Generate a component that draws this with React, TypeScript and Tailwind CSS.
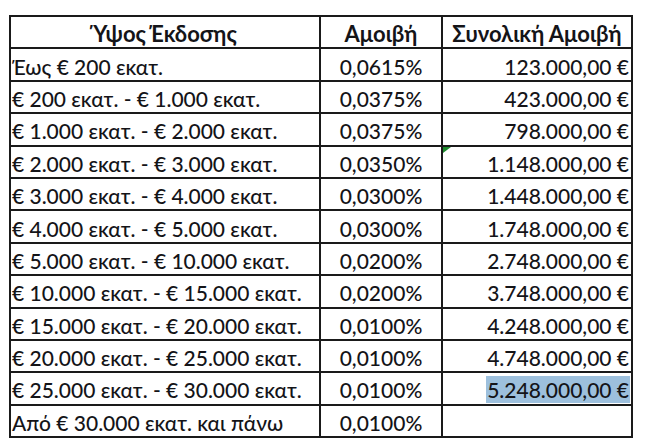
import React from "react";

const rows: [string, string, string][] = [
  ["Έως € 200 εκατ.", "0,0615%", "123.000,00 €"],
  ["€ 200 εκατ. - € 1.000 εκατ.", "0,0375%", "423.000,00 €"],
  ["€ 1.000 εκατ. - € 2.000 εκατ.", "0,0375%", "798.000,00 €"],
  ["€ 2.000 εκατ. - € 3.000 εκατ.", "0,0350%", "1.148.000,00 €"],
  ["€ 3.000 εκατ. - € 4.000 εκατ.", "0,0300%", "1.448.000,00 €"],
  ["€ 4.000 εκατ. - € 5.000 εκατ.", "0,0300%", "1.748.000,00 €"],
  ["€ 5.000 εκατ. - € 10.000 εκατ.", "0,0200%", "2.748.000,00 €"],
  ["€ 10.000 εκατ. - € 15.000 εκατ.", "0,0200%", "3.748.000,00 €"],
  ["€ 15.000 εκατ. - € 20.000 εκατ.", "0,0100%", "4.248.000,00 €"],
  ["€ 20.000 εκατ. - € 25.000 εκατ.", "0,0100%", "4.748.000,00 €"],
  ["€ 25.000 εκατ. - € 30.000 εκατ.", "0,0100%", "5.248.000,00 €"],
  ["Από € 30.000 εκατ. και πάνω", "0,0100%", ""],
];

export default function App() {
  return (
    <div className="w-[660px] h-[446px] bg-white pl-[9px] pt-[15px] overflow-hidden text-[#141418] text-[21px] font-medium leading-none" style={{ fontFamily: "Lato, 'Open Sans', sans-serif" }}>
      <div className="grid grid-cols-[310px_122px_190px] auto-rows-[32.4px] w-[624px] border-l-2 border-t-2 border-[#1a1a1a]">
        <div className="border-r-2 border-b-2 border-[#1a1a1a] flex items-center justify-center font-bold text-[22px] pt-[3px]">Ύψος Έκδοσης</div>
        <div className="border-r-2 border-b-2 border-[#1a1a1a] flex items-center justify-center font-bold text-[22px] pt-[3px]">Αμοιβή</div>
        <div className="border-r-2 border-b-2 border-[#1a1a1a] flex items-center justify-center font-bold text-[22px] pt-[3px]">Συνολική Αμοιβή</div>
        {rows.map((r, i) => (
          <React.Fragment key={i}>
            <div className="border-r-2 border-b-2 border-[#1a1a1a] flex items-center pl-[1px] pt-[3px] whitespace-nowrap">{r[0]}</div>
            <div className="border-r-2 border-b-2 border-[#1a1a1a] flex items-center justify-center pt-[3px]">{r[1]}</div>
            <div className="relative border-r-2 border-b-2 border-[#1a1a1a] flex items-center justify-end pr-[2px] pt-[3px]">
              {i === 3 && (
                <svg className="absolute left-0 top-0" width="8" height="6" viewBox="0 0 8 6">
                  <polygon points="0,0 8,0 0,6" fill="#1e8a2e" />
                </svg>
              )}
              {i === 10 ? (
                <span className="bg-[#9dc0dd] px-[1px] py-[3px] -mr-[1px]">{r[2]}</span>
              ) : (
                <span>{r[2]}</span>
              )}
            </div>
          </React.Fragment>
        ))}
      </div>
    </div>
  );
}
